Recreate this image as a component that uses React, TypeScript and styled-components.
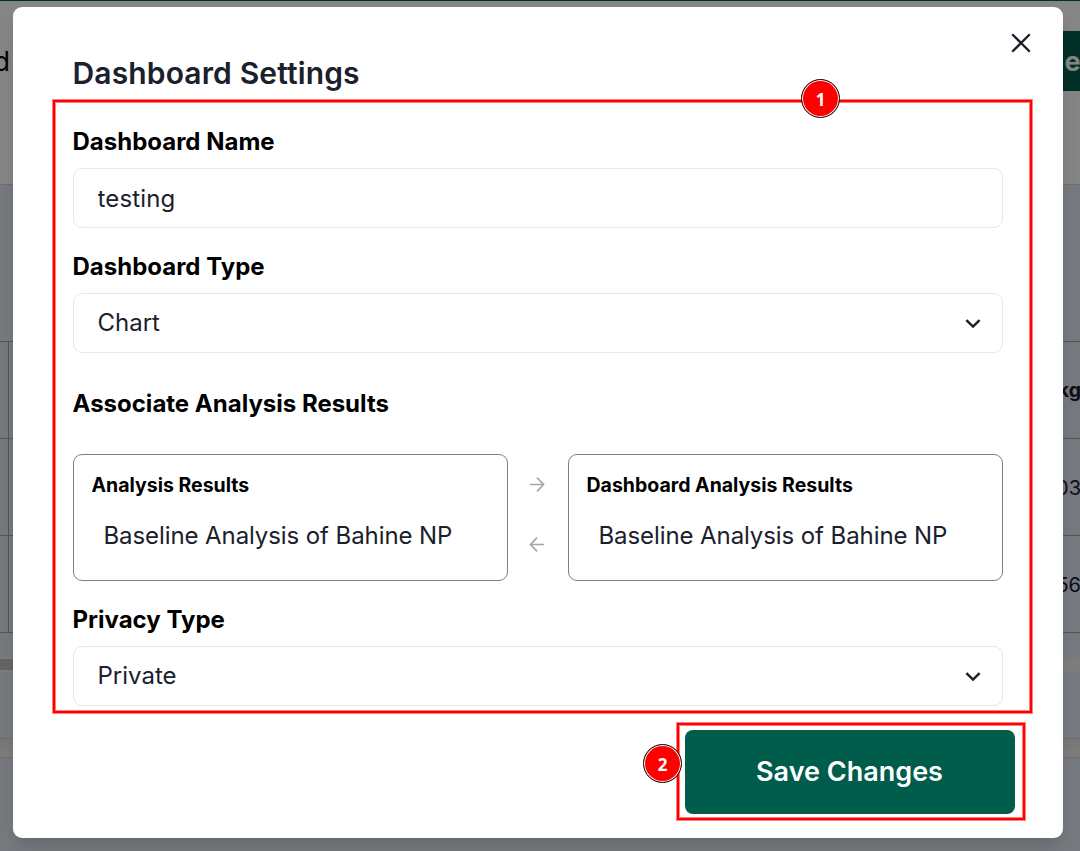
import React from "react";
import styled, { createGlobalStyle } from "styled-components";

const GlobalStyle = createGlobalStyle`
  *, *::before, *::after { box-sizing: border-box; }
  body { margin: 0; overflow: hidden; }
  body, button, input { font-family: Inter, "Liberation Sans", sans-serif; }
`;

/* Page behind the dialog */
const Page = styled.div`
  position: relative;
  height: 851px;
  overflow: hidden;
  display: flex;
  flex-direction: column;
  background: #e2e8f0;
  color: #1a202c;
`;
const Accent = styled.div`
  height: 1px;
  flex: none;
  background: #005c4b;
`;
const PageHeader = styled.div`
  height: 183px;
  flex: none;
  padding-top: 30px;
  display: flex;
  justify-content: space-between;
  align-items: flex-start;
  background: #fff;
`;
const Crumb = styled.div`
  width: 10px;
  height: 60px;
  display: flex;
  justify-content: flex-end;
  align-items: center;
  overflow: hidden;
  font-size: 27px;
  color: #000;
`;
const PageAction = styled.div`
  width: 30px;
  height: 60px;
  padding-left: 14.5px;
  display: flex;
  align-items: center;
  overflow: hidden;
  background: #005c4b;
  color: #fff;
  font-size: 27px;
  font-weight: 700;
`;
const Filters = styled.div`
  height: 157px;
  flex: none;
  border-top: 1px solid #cbd5e0;
`;
const Row = styled.div<{ $head?: boolean }>`
  height: 97px;
  flex: none;
  display: flex;
  justify-content: space-between;
  border-top: 1px solid #a3a3a3;
  font-size: ${(p) => (p.$head ? 19.5 : 20)}px;
  font-weight: ${(p) => (p.$head ? 700 : 400)};
`;
const Gutter = styled.div`
  width: 9px;
  border-right: 1px solid #a3a3a3;
`;
const Cell = styled.div<{ $lift?: boolean }>`
  width: 60px;
  margin-right: -1px;
  padding-top: ${(p) => (p.$lift ? 0 : 1)}px;
  padding-bottom: ${(p) => (p.$lift ? 1 : 0)}px;
  display: flex;
  justify-content: flex-end;
  align-items: center;
  white-space: nowrap;
`;
const TableEnd = styled.div`
  height: 25px;
  flex: none;
  border-top: 1px solid #a3a3a3;
`;
const ScrollTrack = styled.div`
  height: 15px;
  flex: none;
  padding: 2px 0;
  background: #f4f0ec;
`;
const ScrollThumb = styled.div`
  width: 600px;
  height: 11px;
  background: #c1c1c1;
`;
const Footer = styled.div`
  height: 67px;
  flex: none;
  border-bottom: 1px solid #cbd5e0;
`;
const Gap = styled.div`
  height: 19px;
  flex: none;
  background: linear-gradient(#e6e5e4, #f4f1ee);
  border-bottom: 1px solid #cbd5e0;
`;

/* Dialog */
const Overlay = styled.div`
  position: absolute;
  inset: 0;
  padding: 7px 17px 13px 13px;
  background: rgba(0, 0, 0, 0.48);
`;
const Dialog = styled.section`
  position: relative;
  height: 831px;
  padding: 46px 60px 0;
  display: flex;
  flex-direction: column;
  background: #fff;
  border-radius: 9px;
  color: #1a202c;
  box-shadow: 0 15px 22px -4px rgba(0, 0, 0, 0.1), 0 6px 9px -3px rgba(0, 0, 0, 0.05);
`;
const CloseButton = styled.button`
  position: absolute;
  top: 18px;
  right: 24px;
  width: 36px;
  height: 36px;
  padding: 0;
  display: grid;
  place-items: center;
  border: 0;
  background: none;
  color: #1a202c;
`;
const Title = styled.h2`
  margin: 0 0 0 -0.5px;
  height: 40px;
  font-size: 30px;
  line-height: 40px;
  font-weight: 600;
  letter-spacing: 0.14px;
`;
const Label = styled.label<{ $gap: number; $after?: number }>`
  display: block;
  margin-left: -0.5px;
  margin-top: ${(p) => p.$gap}px;
  margin-bottom: ${(p) => p.$after ?? 8}px;
  height: 36px;
  line-height: 36px;
  font-size: 24px;
  font-weight: 700;
  color: #000;
`;
const Field = styled.div`
  height: 60px;
  flex: none;
  padding: 0 18px 0 23.5px;
  display: flex;
  align-items: center;
  justify-content: space-between;
  border: 1px solid #e2e8f0;
  border-radius: 9px;
  font-size: 24px;
`;
const Value = styled.span`
  padding-bottom: 2px;
`;
const Input = styled.input`
  width: 100%;
  padding: 0;
  border: 0;
  outline: 0;
  background: none;
  color: inherit;
  font-size: 24px;
  letter-spacing: 0.15px;
`;
const Transfer = styled.div`
  height: 127px;
  flex: none;
  display: grid;
  grid-template-columns: 435px 60px 435px;
`;
const ListBox = styled.div`
  padding: 15px 17.5px;
  border: 1px solid #808080;
  border-radius: 9px;
`;
const ListTitle = styled.div`
  height: 30px;
  line-height: 30px;
  font-size: 19.5px;
  font-weight: 700;
  color: #000;
`;
const ListItem = styled.div`
  margin-top: 18px;
  padding-left: 12px;
  line-height: 36px;
  font-size: 24px;
  letter-spacing: -0.09px;
  white-space: nowrap;
`;
const Arrows = styled.div`
  padding-right: 2px;
  display: grid;
  grid-template-rows: 60px 60px;
  place-items: center;
  color: #a3a6ab;
`;
const Actions = styled.div`
  margin-top: 24px;
  display: flex;
  justify-content: flex-end;
  margin-right: -12px;
`;
const SaveButton = styled.button`
  width: 330px;
  height: 84px;
  padding: 0 1px 2px 0;
  border: 0;
  border-radius: 8px;
  background: #005c4b;
  color: #fff;
  font-size: 27px;
  font-weight: 600;
`;

/* Step annotations laid over the dialog */
const Outline = styled.div<{ $x: number; $y: number; $w: number; $h: number }>`
  position: absolute;
  left: ${(p) => p.$x}px;
  top: ${(p) => p.$y}px;
  width: ${(p) => p.$w}px;
  height: ${(p) => p.$h}px;
  border: 2px solid #f00;
  outline: 1px solid rgba(255, 0, 0, 0.5);
  box-shadow: inset 0 0 0 1px rgba(255, 0, 0, 0.5);
  pointer-events: none;
`;
const Step = styled.div<{ $x: number; $y: number }>`
  position: absolute;
  left: ${(p) => p.$x}px;
  top: ${(p) => p.$y}px;
  width: 39px;
  height: 39px;
  padding-top: 1px;
  display: grid;
  place-items: center;
  border: 1.4px solid #111;
  border-radius: 50%;
  background: #f00;
  box-shadow: inset 0 0 0 1px #fff;
  color: #fff;
  font: 700 17px "Noto Sans", "Open Sans", sans-serif;
`;

const Chevron = () => (
  <svg width="22" height="22" viewBox="0 0 22 22" fill="none" stroke="#1a202c" strokeWidth="2.5">
    <path d="M4.4 8.1 11 14.6l6.6-6.5" />
  </svg>
);

const Arrow = ({ left }: { left?: boolean }) => (
  <svg width="16" height="16" viewBox="0 0 16 16" fill="none" stroke="currentColor" strokeWidth="1.7">
    <path d={left ? "M15.2 8.5H1.6M8 1.7 1.5 8.5 8 15.3" : "M.8 8.5h13.6M8 1.7 14.5 8.5 8 15.3"} />
  </svg>
);

export default function App() {
  return (
    <Page>
      <GlobalStyle />
      <Accent />
      <PageHeader>
        <Crumb>d</Crumb>
        <PageAction>e</PageAction>
      </PageHeader>
      <Filters />
      <Row $head>
        <Gutter />
        <Cell $lift>kg</Cell>
      </Row>
      <Row>
        <Gutter />
        <Cell>03</Cell>
      </Row>
      <Row>
        <Gutter />
        <Cell>56</Cell>
      </Row>
      <TableEnd />
      <ScrollTrack>
        <ScrollThumb />
      </ScrollTrack>
      <Footer />
      <Gap />
      <Overlay>
        <Dialog role="dialog">
          <CloseButton aria-label="Close">
            <svg width="20" height="20" viewBox="0 0 20 20" fill="none" stroke="currentColor" strokeWidth="2.3">
              <path d="M1.2 1.2l17.6 17.6M18.8 1.2L1.2 18.8" />
            </svg>
          </CloseButton>
          <Title>Dashboard Settings</Title>
          <Label $gap={31}>Dashboard Name</Label>
          <Field>
            <Input defaultValue="testing" />
          </Field>
          <Label $gap={21}>Dashboard Type</Label>
          <Field>
            <Value>Chart</Value>
            <Chevron />
          </Field>
          <Label $gap={33} $after={32}>Associate Analysis Results</Label>
          <Transfer>
            <ListBox>
              <ListTitle>Analysis Results</ListTitle>
              <ListItem>Baseline Analysis of Bahine NP</ListItem>
            </ListBox>
            <Arrows>
              <Arrow />
              <Arrow left />
            </Arrows>
            <ListBox>
              <ListTitle>Dashboard Analysis Results</ListTitle>
              <ListItem>Baseline Analysis of Bahine NP</ListItem>
            </ListBox>
          </Transfer>
          <Label $gap={21}>Privacy Type</Label>
          <Field>
            <Value>Private</Value>
            <Chevron />
          </Field>
          <Actions>
            <SaveButton>Save Changes</SaveButton>
          </Actions>
        </Dialog>
      </Overlay>
      <Outline $x={53} $y={100} $w={979} $h={613} />
      <Outline $x={677} $y={723} $w={348} $h={97} />
      <Step $x={801} $y={79}>1</Step>
      <Step $x={643} $y={744}>2</Step>
    </Page>
  );
}
